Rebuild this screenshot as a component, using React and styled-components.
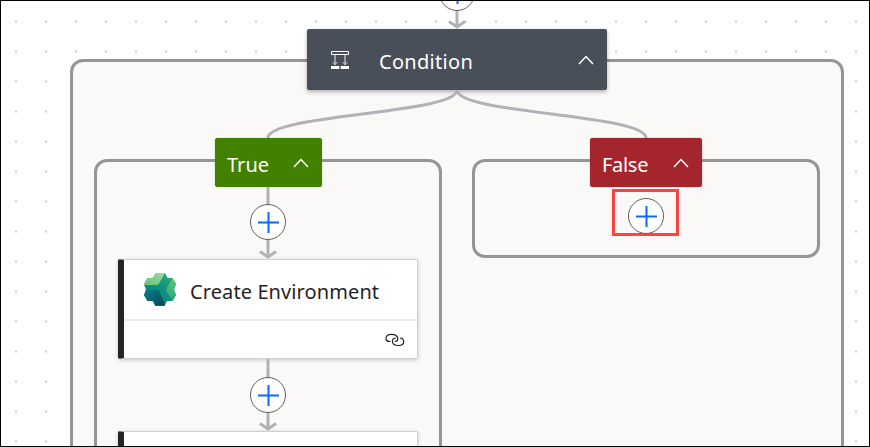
import React from "react";
import styled, { createGlobalStyle } from "styled-components";

const GlobalStyle = createGlobalStyle`
  * { box-sizing: border-box; }
  body { margin: 0; font-family: "Noto Sans", "Open Sans", sans-serif; }
`;

const Canvas = styled.main`
  width: 870px;
  height: 447px;
  overflow: hidden;
  border: 1px solid #000;
  background-color: #fff;
  background-image: radial-gradient(circle, #c4c4c4 0.6px, transparent 1.3px);
  background-size: 30px 30px;
  background-position: 0 5.5px;
`;

const Flow = styled.div`
  display: flex;
  flex-direction: column;
  align-items: center;
  width: 774px;
  margin: -26px 0 0 69px;
`;

/* A scope draws its frame from the middle of its header node downwards. */
const Scope = styled.section`
  display: flex;
  flex-direction: column;
  align-items: center;
  flex-shrink: 0;
  width: ${(p) => p.$width}px;
  height: ${(p) => p.$height}px;
  position: relative;
  z-index: 0;

  &::before {
    content: "";
    position: absolute;
    z-index: -1;
    inset: ${(p) => p.$frameTop}px 0 0;
    border: 3px solid #979593;
    border-radius: 13px;
    background: #faf9f8;
  }
`;

const Branches = styled.div`
  display: flex;
  align-items: flex-start;
  gap: 30px;
`;

const Node = styled.header`
  display: flex;
  align-items: center;
  flex-shrink: 0;
  color: #fff;
`;

const ConditionNode = styled(Node)`
  width: 300px;
  height: 61px;
  padding: 0 13px 0 23px;
  border-radius: 2px;
  background: #484f58;
  box-shadow: 0 2px 4px rgba(0, 0, 0, 0.3);
`;

const BranchNode = styled(Node)`
  justify-content: space-between;
  width: ${(p) => p.$width}px;
  height: 49px;
  margin-left: ${(p) => p.$nudge || 0}px;
  padding: 0 13px 0 12px;
  border-radius: 3px;
  background: ${(p) => p.$color};
  box-shadow: 0 0 1px ${(p) => p.$color};
`;

const Label = styled.span`
  padding-top: 4px;
  font-size: 20px;
  line-height: 28px;
  letter-spacing: ${(p) => p.$spacing || 0}px;
  white-space: nowrap;
`;

const Title = styled(Label)`
  flex: 1;
  margin-left: ${(p) => p.$gap}px;
`;

const Fork = styled.svg`
  flex-shrink: 0;
  fill: none;
  stroke: #b1b1b7;
  stroke-width: 3;
`;

const ActionCard = styled.article`
  display: flex;
  flex-direction: column;
  flex-shrink: 0;
  width: 300px;
  height: 100px;
  border: 1px solid #d2d0ce;
  border-left: 6px solid #242424;
  border-radius: 2px;
  background: #fff;
  color: #242424;
  box-shadow: 0 1px 4px rgba(0, 0, 0, 0.2);
`;

const CardHeader = styled.div`
  display: flex;
  align-items: center;
  height: 61px;
  padding: 1px 0 0 19px;
  border-bottom: 2px solid #edebe9;
`;

const CardFooter = styled.div`
  display: flex;
  flex: 1;
  align-items: center;
  justify-content: flex-end;
  padding-right: 12px;
`;

const ConnectorCell = styled.div`
  display: grid;
  flex-shrink: 0;
  justify-items: center;
  height: ${(p) => p.$height}px;

  > * {
    grid-area: 1 / 1;
  }
`;

const Arrow = styled.svg`
  fill: none;
  stroke: #b1b1b7;
  stroke-width: 3;
`;

const AddButton = styled.button`
  display: grid;
  place-items: center;
  width: 36px;
  height: 36px;
  margin-top: ${(p) => p.$top}px;
  padding: 0;
  border: 1px solid #605e5c;
  border-radius: 50%;
  background: #fff;
`;

const Highlight = styled.div`
  display: flex;
  justify-content: center;
  width: 67px;
  height: 47px;
  margin: 2px 0 0 -1px;
  padding-top: 6px;
  border: 3px solid #ff4343;
`;

const HighlightedAdd = styled(AddButton)`
  flex-shrink: 0;
  margin-left: 1px;
`;

function Plus() {
  return (
    <svg width="22" height="22" fill="none" stroke="#0a68ff" strokeWidth="2">
      <path d="M11.5 1v21M1 11.5h21" />
    </svg>
  );
}

function Connector({ height = 72, buttonTop = 18 }) {
  const tip = height - 2;
  return (
    <ConnectorCell $height={height}>
      <Arrow width="20" height={height}>
        <path d={`M10 0V${tip}M2 ${tip - 5.5} 10 ${tip} 18 ${tip - 5.5}`} />
      </Arrow>
      <AddButton $top={buttonTop} aria-label="Insert a new step">
        <Plus />
      </AddButton>
    </ConnectorCell>
  );
}

function Chevron() {
  return (
    <svg width="16" height="10" fill="none" stroke="#fff" strokeWidth="1.5">
      <path d="M1 9 8 1.5 15 9" />
    </svg>
  );
}

function ConditionIcon() {
  return (
    <svg width="20" height="20" fill="none" stroke="#fff">
      <path d="M1.5 1.5h17v3h-17z" />
      <path d="M5 5v10M15 5v10" stroke="#b6b9bd" strokeWidth="1.5" />
      <path d="M2.5 12 5 14.5 7.5 12M12.5 12 15 14.5 17.5 12" stroke="#d4d6d8" />
      <path d="M1 17.5h8.3M10.7 17.5H19" strokeWidth="3" />
    </svg>
  );
}

function EnvironmentIcon() {
  return (
    <svg width="34" height="34" viewBox="-1 0 34 34">
      <defs>
        <linearGradient id="leafTop" x1="0" y1="1" x2="1" y2="0">
          <stop stopColor="#62c27a" />
          <stop offset="1" stopColor="#a0dba0" />
        </linearGradient>
        <linearGradient id="leafRight" x1="0" y1="0" x2="0" y2="1">
          <stop stopColor="#62c878" />
          <stop offset="1" stopColor="#24a47c" />
        </linearGradient>
        <linearGradient id="leafBottom" x1="0" y1="0" x2="1" y2="1">
          <stop stopColor="#08808c" />
          <stop offset="1" stopColor="#044454" />
        </linearGradient>
        <linearGradient id="hub" x1="0" y1="1" x2="1" y2="0">
          <stop stopColor="#047a8c" />
          <stop offset="0.5" stopColor="#0c8f80" />
          <stop offset="1" stopColor="#30b070" />
        </linearGradient>
      </defs>
      <path
        d="M12 0H21L23 4Q23.500 5 24.500 5H28.500L32 11 30.300 15.500Q30 16.500 30.300 17.500L32 22 28.500 28H24Q23 28 22.500 29L20.500 32.800H11.300L9.500 29Q9 28 8 28H3.500L0 22 1.700 17.500Q2 16.500 1.700 15.500L0 11.500 3.500 5H8Q9 5 9.500 4Z"
        fill="url(#hub)"
      />
      <path d="M12 0H21L15 10.500Q14 12 12.300 12H.2L0 11.500 3.500 5H8Q9 5 9.500 4Z" fill="url(#leafTop)" />
      <path d="M28.500 5 32 11 30.300 15.500Q30 16.500 30.300 17.500L32 22 28.500 28 22.700 18.500Q21.900 17 22.700 15.500Z" fill="url(#leafRight)" />
      <path d="M1.900 17H13Q14.500 17 15.300 18.500L21 31.500 20.500 32.800H11.300L9.500 29Q9 28 8 28H3.500L0 22 1.700 17.500Z" fill="url(#leafBottom)" />
    </svg>
  );
}

function LinkIcon() {
  return (
    <svg width="20" height="14" fill="none" stroke="#242424" strokeWidth="1.2">
      <path d="M5.5 8.5H4.5C2.4 8.5 1 7 1 5.2 1 2.6 3.3 1.3 6.3 1.3c4 0 6.5 1.7 6.5 4.3 0 1.5-1 2.9-2.9 2.9" />
      <path d="M10.8 5C8.7 5 7.4 6.5 7.4 8.2c0 2.6 2.5 4.3 6 4.3 3 0 5.3-1.3 5.3-3.7 0-2-1.5-3.6-3.5-3.7" />
    </svg>
  );
}

export default function App() {
  return (
    <>
      <GlobalStyle />
      <Canvas>
        <Flow>
          <Connector height={54} buttonTop={0} />
          <Scope $width={774} $height={460} $frameTop={30}>
            <ConditionNode>
              <ConditionIcon />
              <Title $gap={29} $spacing={0.3}>Condition</Title>
              <Chevron />
            </ConditionNode>
            <Fork width="400" height="48">
              <path d="M200 0C200 24 11 24 11 48M200 0C200 24 389 24 389 48" />
            </Fork>
            <Branches>
              <Scope $width={348} $height={380} $frameTop={21}>
                <BranchNode $width={107} $nudge={1} $color="#428000">
                  <Label>True</Label>
                  <Chevron />
                </BranchNode>
                <Connector buttonTop={17} />
                <ActionCard>
                  <CardHeader>
                    <EnvironmentIcon />
                    <Title $gap={13} $spacing={0.1}>Create Environment</Title>
                  </CardHeader>
                  <CardFooter>
                    <LinkIcon />
                  </CardFooter>
                </ActionCard>
                <Connector />
                <ActionCard />
              </Scope>
              <Scope $width={348} $height={120} $frameTop={21}>
                <BranchNode $width={112} $color="#a4262c">
                  <Label $spacing={-0.3}>False</Label>
                  <Chevron />
                </BranchNode>
                <Highlight>
                  <HighlightedAdd $top={0} aria-label="Insert a new step">
                    <Plus />
                  </HighlightedAdd>
                </Highlight>
              </Scope>
            </Branches>
          </Scope>
        </Flow>
      </Canvas>
    </>
  );
}
